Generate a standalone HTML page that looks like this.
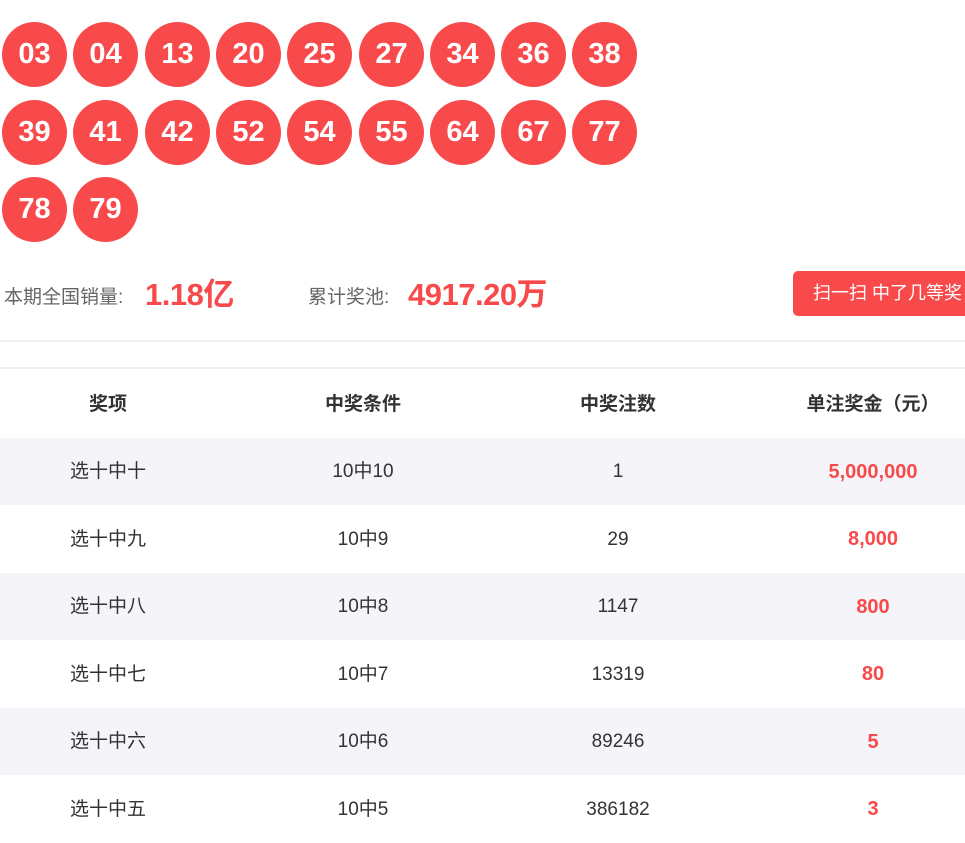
<!DOCTYPE html><html><head><meta charset="utf-8"><style>
body{margin:0;width:965px;height:830px;overflow:hidden;background:#fff;font-family:"Liberation Sans","Noto Sans CJK SC",sans-serif;}
.ball{position:absolute;width:65px;height:65px;border-radius:50%;background:#f84a4b;color:#fff;font-weight:bold;font-size:29px;line-height:65px;text-align:center;}
.lab{position:absolute;top:286px;font-size:19px;color:#666;line-height:24px;white-space:nowrap;}
.num{position:absolute;top:277px;color:#f84a4b;font-weight:bold;font-size:31px;line-height:36px;white-space:nowrap;letter-spacing:-0.5px;}
.btn{position:absolute;left:793px;top:271px;width:180px;height:45px;background:#f84a4b;border-radius:5px;color:#fff;font-size:18px;line-height:44px;padding-left:20px;box-sizing:border-box;}
.hr{position:absolute;left:0;width:965px;height:2px;background:#f0f0f2;}
table{position:absolute;top:370px;left:0;width:1020px;table-layout:fixed;border-collapse:collapse;}
td{height:67.5px;text-align:center;font-size:19px;color:#333;padding:2px 0 0 0;line-height:22px;box-sizing:border-box;}
td span{display:inline-block;line-height:22px;vertical-align:middle;}
tr.h td{font-weight:bold;}
tr.g td{background:#f5f5f9;}
td.r{color:#f84a4b;font-weight:bold;font-size:20px;padding-top:0;}
</style></head><body>
<div class="ball" style="left:2px;top:22px">03</div><div class="ball" style="left:73px;top:22px">04</div><div class="ball" style="left:145px;top:22px">13</div><div class="ball" style="left:216px;top:22px">20</div><div class="ball" style="left:287px;top:22px">25</div><div class="ball" style="left:359px;top:22px">27</div><div class="ball" style="left:430px;top:22px">34</div><div class="ball" style="left:501px;top:22px">36</div><div class="ball" style="left:572px;top:22px">38</div>
<div class="ball" style="left:2px;top:100px">39</div><div class="ball" style="left:73px;top:100px">41</div><div class="ball" style="left:145px;top:100px">42</div><div class="ball" style="left:216px;top:100px">52</div><div class="ball" style="left:287px;top:100px">54</div><div class="ball" style="left:359px;top:100px">55</div><div class="ball" style="left:430px;top:100px">64</div><div class="ball" style="left:501px;top:100px">67</div><div class="ball" style="left:572px;top:100px">77</div>
<div class="ball" style="left:2px;top:177px">78</div><div class="ball" style="left:73px;top:177px">79</div>
<div class="lab" style="left:4px">本期全国销量:</div><div class="num" style="left:145px">1.18亿</div>
<div class="lab" style="left:308px">累计奖池:</div><div class="num" style="left:408px">4917.20万</div>
<div class="btn">扫一扫 中了几等奖</div>
<div class="hr" style="top:340px"></div>
<div class="hr" style="top:367px"></div>
<table>
<colgroup><col style="width:216px"><col style="width:294px"><col style="width:216px"><col style="width:294px"></colgroup>
<tr class="h"><td>奖项</td><td>中奖条件</td><td>中奖注数</td><td>单注奖金（元）</td></tr>
<tr class="g"><td>选十中十</td><td>10中10</td><td><span>1</span></td><td class="r"><span>5,000,000</span></td></tr>
<tr><td>选十中九</td><td>10中9</td><td><span>29</span></td><td class="r"><span>8,000</span></td></tr>
<tr class="g"><td>选十中八</td><td>10中8</td><td><span>1147</span></td><td class="r"><span>800</span></td></tr>
<tr><td>选十中七</td><td>10中7</td><td><span>13319</span></td><td class="r"><span>80</span></td></tr>
<tr class="g"><td>选十中六</td><td>10中6</td><td><span>89246</span></td><td class="r"><span>5</span></td></tr>
<tr><td>选十中五</td><td>10中5</td><td><span>386182</span></td><td class="r"><span>3</span></td></tr>
</table>
</body></html>
